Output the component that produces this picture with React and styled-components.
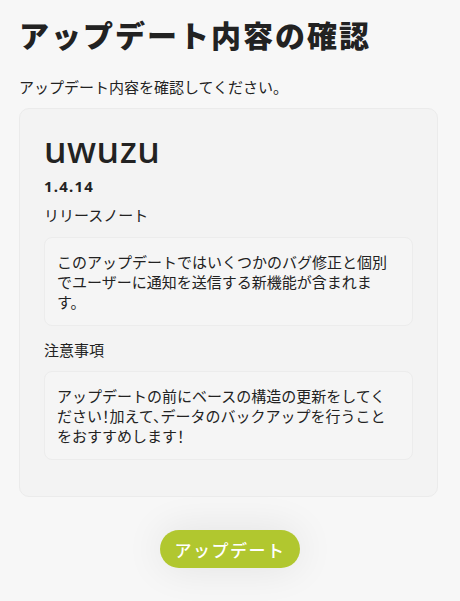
import React from 'react'
import styled, { createGlobalStyle } from 'styled-components'

const GlobalStyle = createGlobalStyle`
  html, body {
    margin: 0;
    padding: 0;
    background-color: #f7f7f7;
  }
  body {
    font-family: "Noto Sans", "Noto Sans CJK JP", sans-serif;
    color: #222222;
  }
  * {
    box-sizing: border-box;
  }
`

const Page = styled.div`
  width: 460px;
  min-height: 601px;
  padding: 16px 22px 0 19px;
  display: flex;
  flex-direction: column;
`

const Title = styled.h1`
  margin: 0;
  font-family: "Noto Sans CJK JP", sans-serif;
  font-weight: 900;
  font-size: 30px;
  line-height: 36px;
  letter-spacing: 2px;
  color: #222222;
`

const Lead = styled.p`
  margin: 24px 0 10px 0;
  font-family: "Noto Sans CJK JP", sans-serif;
  font-size: 15px;
  line-height: 22px;
`

const Card = styled.section`
  background-color: #f3f3f3;
  border: 1px solid #ebebeb;
  border-radius: 10px;
  padding: 18px 24px 36px 24px;
  display: flex;
  flex-direction: column;
`

const AppName = styled.h2`
  margin: 0;
  font-family: "Noto Sans", sans-serif;
  font-weight: 500;
  font-size: 36px;
  line-height: 46px;
  letter-spacing: 0.5px;
`

const Version = styled.div`
  font-family: "Noto Sans", sans-serif;
  font-weight: 700;
  font-size: 15px;
  line-height: 22px;
  letter-spacing: 1.2px;
  margin-top: 2px;
`

const Label = styled.h3`
  margin: ${(p) => (p.$second ? '13px 0 10px 0' : '7px 0 11px 0')};
  font-family: "Noto Sans CJK JP", sans-serif;
  font-weight: 400;
  font-size: 15px;
  line-height: 22px;
`

const NoteBox = styled.div`
  background-color: #f5f5f5;
  border: 1px solid #ececec;
  border-radius: 8px;
  padding: 14px 19px 13px 12px;
  font-family: "Noto Sans CJK JP", sans-serif;
  font-size: 15px;
  line-height: 20px;
  font-feature-settings: ${(p) => (p.$compact ? '"halt"' : 'normal')};
`

const ButtonRow = styled.div`
  display: flex;
  justify-content: center;
  margin-top: 33px;
  padding-left: 3px;
`

const UpdateButton = styled.button`
  width: 140px;
  height: 38px;
  border: none;
  border-radius: 19px;
  background-color: #b1c72f;
  color: #ffffff;
  font-family: "Noto Sans CJK JP", sans-serif;
  font-weight: 500;
  font-size: 17px;
  letter-spacing: 1.5px;
  box-shadow: 0 0 40px rgba(0, 0, 0, 0.09);
  cursor: pointer;
`

const App = () => {
  return (
    <>
      <GlobalStyle />
      <Page>
        <Title>アップデート内容の確認</Title>
        <Lead>アップデート内容を確認してください。</Lead>

        <Card>
          <AppName>uwuzu</AppName>
          <Version>1.4.14</Version>

          <Label>リリースノート</Label>
          <NoteBox>
            このアップデートではいくつかのバグ修正と個別でユーザーに通知を送信する新機能が含まれます。
          </NoteBox>

          <Label $second>注意事項</Label>
          <NoteBox $compact>
            アップデートの前にベースの構造の更新をしてください！加えて、データのバックアップを行うことをおすすめします！
          </NoteBox>
        </Card>

        <ButtonRow>
          <UpdateButton>アップデート</UpdateButton>
        </ButtonRow>
      </Page>
    </>
  )
}

export default App
